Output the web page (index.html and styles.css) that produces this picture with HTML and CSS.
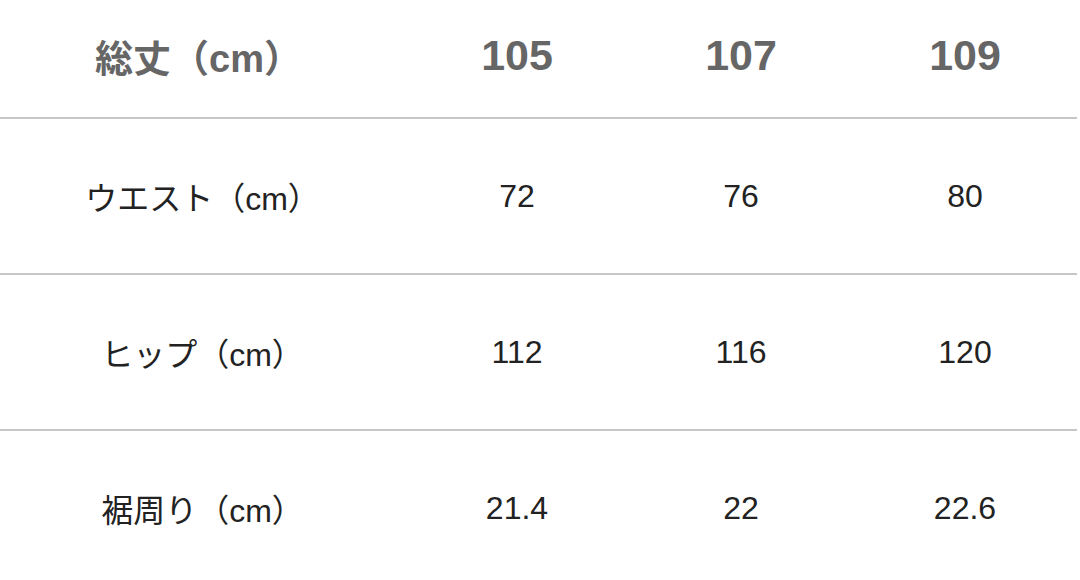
FILE: index.html
```html
<!DOCTYPE html>
<html lang="ja">
<head>
<meta charset="utf-8">
<link rel="stylesheet" href="styles.css">
</head>
<body>
<div class="card">
  <table class="size-table">
    <colgroup>
      <col class="c-label"><col class="c-val"><col class="c-val"><col class="c-val">
    </colgroup>
    <thead>
      <tr class="head-row">
        <th class="head-label">総丈（cm）</th><th>105</th><th>107</th><th>109</th>
      </tr>
    </thead>
    <tbody>
      <tr><td>ウエスト（cm）</td><td>72</td><td>76</td><td>80</td></tr>
      <tr><td>ヒップ（cm）</td><td>112</td><td>116</td><td>120</td></tr>
      <tr><td>裾周り（cm）</td><td>21.4</td><td>22</td><td>22.6</td></tr>
    </tbody>
  </table>
</div>
</body>
</html>
```
FILE: styles.css
```css
html, body {
  margin: 0;
  padding: 0;
  background: #ffffff;
}
body {
  width: 1080px;
  height: 580px;
  overflow: hidden;
  font-family: "Liberation Sans", "Noto Sans CJK JP", sans-serif;
}
.card {
  width: 1080px;
}
.size-table {
  width: 1077px;
  border-collapse: collapse;
  table-layout: fixed;
}
.c-label { width: 405px; }
.c-val { width: 224px; }
.size-table th,
.size-table td {
  text-align: center;
  vertical-align: middle;
  padding: 0;
}
.head-row th {
  height: 111px;
  padding-bottom: 6px;
  font-size: 43px;
  font-weight: 700;
  color: #666666;
  border-bottom: 2px solid #c6c6c6;
}
.head-row .head-label {
  font-size: 38px;
  padding-left: 0;
  padding-right: 8px;
}
.size-table tbody td {
  height: 154px;
  font-size: 32px;
  font-weight: 400;
  color: #222222;
  border-bottom: 2px solid #c6c6c6;
}
.size-table tbody tr:last-child td {
  border-bottom: none;
}
```
